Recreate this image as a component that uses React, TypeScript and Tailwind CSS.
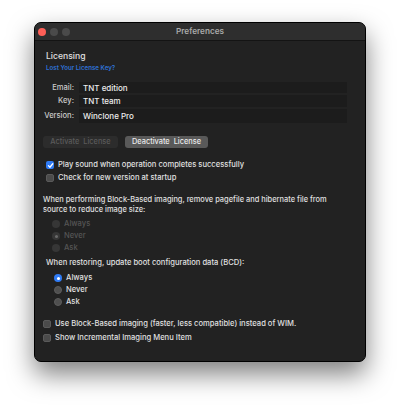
import React from "react";

const font = { fontFamily: "Inter, 'Liberation Sans', sans-serif" };

function Check({ checked }: { checked?: boolean }) {
  return checked ? (
    <div className="w-[8px] h-[8px] rounded-[2px] bg-[#2f7bf5] flex items-center justify-center">
      <svg width="7" height="7" viewBox="0 0 10 10">
        <path d="M2 5.2 L4.2 7.5 L8.2 2.5" stroke="white" strokeWidth="1.8" fill="none" strokeLinecap="round" strokeLinejoin="round" />
      </svg>
    </div>
  ) : (
    <div className="w-[8px] h-[8px] rounded-[2px] bg-[#4b4b4b] border border-[#5a5a5a]" />
  );
}

function Radio({ on, disabled }: { on?: boolean; disabled?: boolean }) {
  if (disabled) {
    return (
      <div className="w-[8px] h-[8px] rounded-full bg-[#363636] flex items-center justify-center">
        {on && <div className="w-[3px] h-[3px] rounded-full bg-[#6a6a6a]" />}
      </div>
    );
  }
  return on ? (
    <div className="w-[8px] h-[8px] rounded-full bg-[#2f7bf5] flex items-center justify-center">
      <div className="w-[3px] h-[3px] rounded-full bg-white" />
    </div>
  ) : (
    <div className="w-[8px] h-[8px] rounded-full bg-[#4f4f4f] border border-[#5c5c5c]" />
  );
}

function Field({ label, value, h, mt }: { label: string; value: string; h: string; mt: string }) {
  return (
    <div className={`flex items-center ${h} ${mt}`}>
      <div className="w-[31px] text-right text-[7.6px] font-medium text-[#cacaca]">{label}</div>
      <div className="ml-[5px] w-[268px] h-full bg-[#1c1c1c] flex items-center pl-[4px] text-[8px] font-medium text-[#ececec]">
        {value}
      </div>
    </div>
  );
}

export default function App() {
  return (
    <div className="w-[400px] h-[407px] bg-white pt-[22px] pl-[34px]" style={font}>
      <div className="w-[332px] h-[340px] rounded-[7px] bg-[#222222] overflow-hidden flex flex-col border border-black shadow-[0_12px_26px_rgba(0,0,0,0.5)]">
        <div className="h-[18px] shrink-0 bg-[#2e2e2e] border-b border-[#141414] grid grid-cols-[1fr_auto_1fr] items-center">
          <div className="flex items-center gap-[4px] pl-[3px]">
            <div className="w-[8px] h-[8px] rounded-full bg-[#fe5f57]" />
            <div className="w-[8px] h-[8px] rounded-full bg-[#4a4a4a]" />
            <div className="w-[8px] h-[8px] rounded-full bg-[#4a4a4a]" />
          </div>
          <div className="text-[8.2px] font-semibold text-[#a9a9a9]">Preferences</div>
          <div />
        </div>

        <div className="flex flex-col px-[8px] pt-[9px] text-[#e0e0e0] font-medium">
          <div className="h-[12px] flex items-center pl-[3px] text-[8.6px] font-medium">Licensing</div>
          <div className="h-[12px] flex items-center pl-[3px] text-[6.2px] font-semibold text-[#2f72d6]">Lost Your License Key?</div>

          <Field label="Email:" value="TNT edition" h="h-[11px]" mt="mt-[8px]" />
          <Field label="Key:" value="TNT team" h="h-[12px]" mt="mt-[2px]" />
          <Field label="Version:" value="Winclone Pro" h="h-[14px]" mt="mt-[2px]" />

          <div className="flex items-center gap-[7px] mt-[13px] h-[12px]">
            <div className="w-[75px] h-full rounded-[3px] bg-[#2c2c2c] flex items-center justify-center text-[7.4px] text-[#5b5b5b] whitespace-pre">
              Activate  License
            </div>
            <div className="w-[83px] h-full rounded-[3px] bg-[#595959] flex items-center justify-center text-[7.4px] text-[#ececec] whitespace-pre">
              Deactivate  License
            </div>
          </div>

          <div className="flex items-center h-[12px] mt-[11px] pl-[3px] gap-[4px] text-[7.6px]">
            <Check checked />
            <span>Play sound when operation completes successfully</span>
          </div>
          <div className="flex items-center h-[12px] mt-[1px] pl-[3px] gap-[4px] text-[7.6px]">
            <Check />
            <span>Check for new version at startup</span>
          </div>

          <div className="mt-[11px] text-[7.45px] leading-[10px] pr-[10px]">
            When performing Block-Based imaging, remove pagefile and hibernate file from source to reduce image size:
          </div>

          <div className="flex flex-col mt-[3px] pl-[9px] text-[7.6px] text-[#555555]">
            <div className="h-[12px] flex items-center gap-[4px]"><Radio disabled /><span>Always</span></div>
            <div className="h-[12px] flex items-center gap-[4px]"><Radio disabled on /><span>Never</span></div>
            <div className="h-[12px] flex items-center gap-[4px]"><Radio disabled /><span>Ask</span></div>
          </div>

          <div className="h-[12px] mt-[3px] flex items-center pl-[3px] text-[7.6px]">
            When restoring, update boot configuration data (BCD):
          </div>

          <div className="flex flex-col mt-[3px] pl-[11px] text-[7.6px]">
            <div className="h-[12px] flex items-center gap-[4px]"><Radio on /><span>Always</span></div>
            <div className="h-[12px] flex items-center gap-[4px]"><Radio /><span>Never</span></div>
            <div className="h-[12px] flex items-center gap-[4px]"><Radio /><span>Ask</span></div>
          </div>

          <div className="flex items-center h-[12px] mt-[10px] gap-[4px] text-[7.6px]">
            <Check />
            <span>Use Block-Based imaging (faster, less compatible) instead of WIM.</span>
          </div>
          <div className="flex items-center h-[12px] mt-[2px] gap-[4px] text-[7.6px]">
            <Check />
            <span>Show Incremental Imaging Menu Item</span>
          </div>
        </div>
      </div>
    </div>
  );
}
